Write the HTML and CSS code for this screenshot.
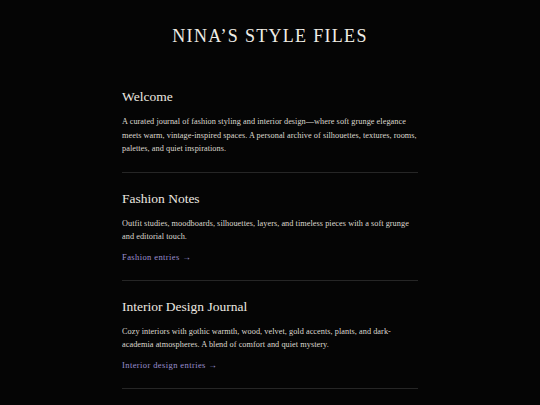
FILE: index.html
```html
<!DOCTYPE html>
<html lang="en">

<head>
    <meta charset="UTF-8">
    <meta name="viewport" content="width=device-width, initial-scale=1.0">
    <title>Nina's Style Files</title>
    <link rel="stylesheet" href="styles.css">
</head>

<body>
    <header class="site-header">
        <h1>Nina’s Style Files</h1>
    </header>

    <main class="container">
        <section class="section">
            <h2>Welcome</h2>
            <p>A curated journal of fashion styling and interior design—where soft grunge elegance meets warm,
                vintage-inspired spaces. A personal archive of silhouettes, textures, rooms, palettes, and quiet
                inspirations.</p>
        </section>

        <section class="section">
            <h2>Fashion Notes</h2>
            <p>Outfit studies, moodboards, silhouettes, layers, and timeless pieces with a soft grunge and editorial
                touch.</p>
            <a class="more" href="#">Fashion entries →</a>
        </section>

        <section class="section">
            <h2>Interior Design Journal</h2>
            <p>Cozy interiors with gothic warmth, wood, velvet, gold accents, plants, and dark-academia atmospheres.
                A blend of comfort and quiet mystery.</p>
            <a class="more" href="#">Interior design entries →</a>
        </section>
    </main>
</body>

</html>
```

FILE: styles.css
```css
* {
    margin: 0;
    padding: 0;
    box-sizing: border-box;
}

body {
    font-family: Georgia, 'Liberation Serif', serif;
    background: #050505;
    color: #e8e4dc;
}

.site-header {
    padding: 26px 0 0;
    text-align: center;
}

.site-header h1 {
    font-size: 18px;
    font-weight: normal;
    text-transform: uppercase;
    letter-spacing: 1.3px;
    color: #f0ede6;
}

.container {
    max-width: 296px;
    margin: 0 auto;
    padding-top: 42px;
}

.section {
    padding-bottom: 16px;
    margin-bottom: 18px;
    border-bottom: 1px solid #262626;
}

.section h2 {
    font-size: 13.5px;
    font-weight: normal;
    margin-bottom: 10px;
    color: #ece8e0;
}

.section p {
    font-size: 8.25px;
    line-height: 13.5px;
    letter-spacing: 0.05px;
    color: #ddd8cf;
}

.more {
    display: inline-block;
    margin-top: 8px;
    font-size: 8.5px;
    color: #9a8fd0;
    text-decoration: none;
    letter-spacing: 0.4px;
}
```
